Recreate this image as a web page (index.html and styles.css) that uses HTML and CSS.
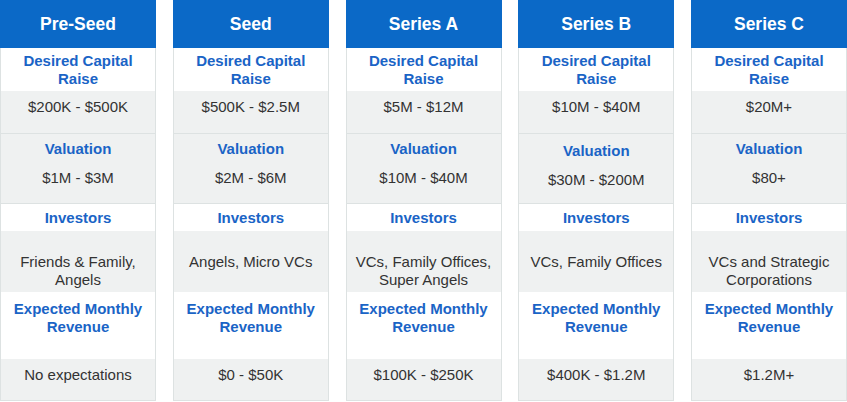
FILE: index.html
```html
<!DOCTYPE html>
<html>
<head>
<meta charset="utf-8">
<link rel="stylesheet" href="styles.css">
</head>
<body>
<div class="board">
  <div class="col">
    <div class="head">Pre-Seed</div>
    <div class="cell lbl r-dlabel">Desired Capital<br>Raise</div>
    <div class="cell val gray r-dval">$200K - $500K</div>
    <div class="cell gray r-valuation"><div class="lbl">Valuation</div><div class="val v2">$1M - $3M</div></div>
    <div class="cell lbl r-ilabel">Investors</div>
    <div class="cell val gray r-ival">Friends &amp; Family,<br>Angels</div>
    <div class="cell lbl r-elabel">Expected Monthly<br>Revenue</div>
    <div class="cell val gray r-eval">No expectations</div>
  </div>
  <div class="col">
    <div class="head">Seed</div>
    <div class="cell lbl r-dlabel">Desired Capital<br>Raise</div>
    <div class="cell val gray r-dval">$500K - $2.5M</div>
    <div class="cell gray r-valuation"><div class="lbl">Valuation</div><div class="val v2">$2M - $6M</div></div>
    <div class="cell lbl r-ilabel">Investors</div>
    <div class="cell val gray r-ival">Angels, Micro VCs</div>
    <div class="cell lbl r-elabel">Expected Monthly<br>Revenue</div>
    <div class="cell val gray r-eval">$0 - $50K</div>
  </div>
  <div class="col">
    <div class="head">Series A</div>
    <div class="cell lbl r-dlabel">Desired Capital<br>Raise</div>
    <div class="cell val gray r-dval">$5M - $12M</div>
    <div class="cell gray r-valuation"><div class="lbl">Valuation</div><div class="val v2">$10M - $40M</div></div>
    <div class="cell lbl r-ilabel">Investors</div>
    <div class="cell val gray r-ival">VCs, Family Offices,<br>Super Angels</div>
    <div class="cell lbl r-elabel">Expected Monthly<br>Revenue</div>
    <div class="cell val gray r-eval">$100K - $250K</div>
  </div>
  <div class="col">
    <div class="head">Series B</div>
    <div class="cell lbl r-dlabel">Desired Capital<br>Raise</div>
    <div class="cell val gray r-dval">$10M - $40M</div>
    <div class="cell gray r-valuation low"><div class="lbl">Valuation</div><div class="val v2">$30M - $200M</div></div>
    <div class="cell lbl r-ilabel">Investors</div>
    <div class="cell val gray r-ival">VCs, Family Offices</div>
    <div class="cell lbl r-elabel">Expected Monthly<br>Revenue</div>
    <div class="cell val gray r-eval">$400K - $1.2M</div>
  </div>
  <div class="col">
    <div class="head">Series C</div>
    <div class="cell lbl r-dlabel">Desired Capital<br>Raise</div>
    <div class="cell val gray r-dval">$20M+</div>
    <div class="cell gray r-valuation"><div class="lbl">Valuation</div><div class="val v2">$80+</div></div>
    <div class="cell lbl r-ilabel">Investors</div>
    <div class="cell val gray r-ival">VCs and Strategic<br>Corporations</div>
    <div class="cell lbl r-elabel">Expected Monthly<br>Revenue</div>
    <div class="cell val gray r-eval">$1.2M+</div>
  </div>
</div>
</body>
</html>
```
FILE: styles.css
```css
html, body {
  margin: 0;
  padding: 0;
  background: #ffffff;
}
body {
  font-family: "Liberation Sans", Arial, sans-serif;
  font-size: 15px;
  line-height: 18px;
  color: #333333;
}
.board {
  width: 847px;
  display: flex;
  justify-content: space-between;
}
.col {
  width: 156px;
  display: flex;
  flex-direction: column;
}
.head {
  height: 48px;
  background: #0b69c7;
  color: #ffffff;
  font-weight: bold;
  font-size: 17.5px;
  line-height: 48px;
  text-align: center;
}
.cell {
  box-sizing: border-box;
  border-left: 1px solid #dde2e2;
  border-right: 1px solid #dde2e2;
  text-align: center;
  padding-left: 4px;
  padding-right: 4px;
  background: #ffffff;
}
.gray {
  background: #eff1f1;
}
.lbl {
  color: #1a64c6;
  font-weight: bold;
}
.val {
  color: #333333;
}
.r-dlabel {
  height: 43px;
  padding-top: 4px;
}
.r-dval {
  height: 43px;
  padding-top: 7px;
  border-bottom: 1px solid #dde2e2;
}
.r-valuation {
  height: 70px;
  padding-top: 6px;
  border-bottom: 1px solid #dde2e2;
}
.r-valuation.low {
  padding-top: 8px;
}
.v2 {
  margin-top: 11px;
}
.r-ilabel {
  height: 27px;
  padding-top: 5px;
}
.r-ival {
  height: 61px;
  padding-top: 22px;
}
.r-elabel {
  height: 67px;
  padding-top: 8px;
}
.r-eval {
  height: 42px;
  padding-top: 7px;
  border-bottom: 1px solid #dde2e2;
}
```
